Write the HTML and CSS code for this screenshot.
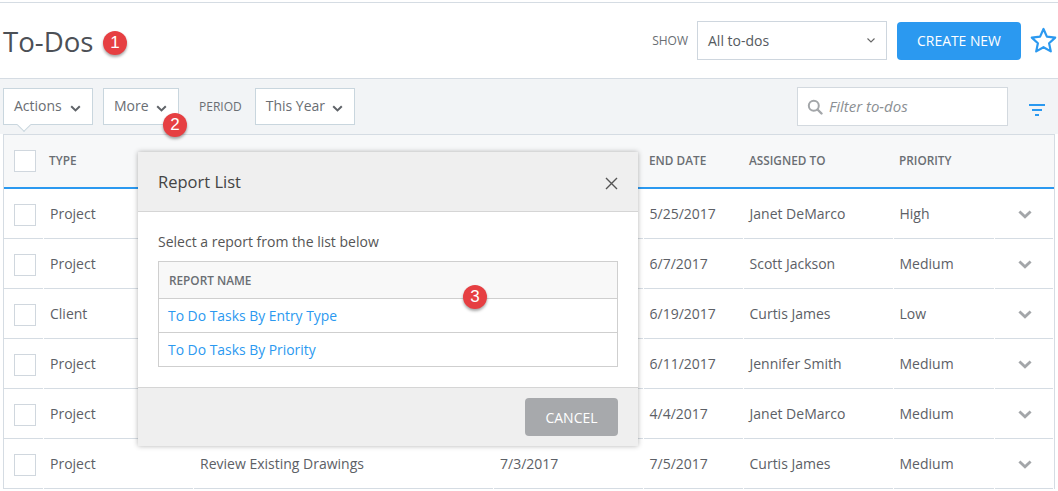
FILE: index.html
```html
<!DOCTYPE html>
<html lang="en">
<head>
<meta charset="utf-8">
<title>To-Dos</title>
<link rel="stylesheet" href="styles.css">
</head>
<body>
<div class="page">
  <header class="header">
    <div class="title-wrap">
      <h1 class="title">To-Dos</h1>
      <span class="badge badge-one">1</span>
    </div>
    <div class="header-actions">
      <span class="label">SHOW</span>
      <div class="select"><span>All to-dos</span>
        <svg class="select-caret" width="8" height="5" viewBox="0 0 8 5"><path d="M.5.5L4 4 7.5.5" fill="none" stroke="#666" stroke-width="1.1"/></svg>
      </div>
      <button class="btn-create">CREATE NEW</button>
      <svg class="star" width="27" height="27" viewBox="0 0 27 27"><path d="M13.5 2l3.4 7.6 8.3 1-6.1 5.6 1.7 8.2-7.3-4.2-7.3 4.2 1.7-8.2-6.1-5.6 8.3-1z" fill="none" stroke="#2b99f0" stroke-width="2.2" stroke-linejoin="round"/></svg>
    </div>
  </header>

  <div class="toolbar">
    <div class="tool-left">
      <div class="drop drop-actions"><span class="drop-text">Actions</span>
        <svg class="chev" width="11" height="7" viewBox="0 0 11 7"><path d="M1.2 1.2l4.3 4.2 4.3-4.2" fill="none" stroke="#5f6368" stroke-width="2"/></svg>
        <span class="pointer"></span>
      </div>
      <div class="drop drop-more"><span class="drop-text">More</span>
        <svg class="chev" width="11" height="7" viewBox="0 0 11 7"><path d="M1.2 1.2l4.3 4.2 4.3-4.2" fill="none" stroke="#5f6368" stroke-width="2"/></svg>
      </div>
      <span class="label label-period">PERIOD</span>
      <div class="drop drop-year"><span class="drop-text">This Year</span>
        <svg class="chev" width="11" height="7" viewBox="0 0 11 7"><path d="M1.2 1.2l4.3 4.2 4.3-4.2" fill="none" stroke="#5f6368" stroke-width="2"/></svg>
      </div>
    </div>
    <div class="tool-right">
      <div class="search">
        <svg width="16" height="16" viewBox="0 0 16 16"><circle cx="6.8" cy="6.8" r="5" fill="none" stroke="#a3a6a9" stroke-width="2"/><path d="M10.5 10.5l4 4" stroke="#a3a6a9" stroke-width="2.4" stroke-linecap="round"/></svg>
        <span class="search-text">Filter to-dos</span>
      </div>
      <svg class="filter" width="16" height="12" viewBox="0 0 16 12"><path d="M0 1h16M3 6h10M6 11h4" stroke="#2b99f0" stroke-width="2"/></svg>
    </div>
  </div>

  <div class="table">
    <div class="row row-head">
      <div class="cell"><span class="check"></span></div>
      <div class="cell cell-type">TYPE</div>
      <div class="cell"></div>
      <div class="cell"></div>
      <div class="cell">END DATE</div>
      <div class="cell">ASSIGNED TO</div>
      <div class="cell">PRIORITY</div>
      <div class="cell"></div>
    </div>
    <div class="row">
      <div class="cell"><span class="check"></span></div><div class="cell">Project</div><div class="cell"></div><div class="cell"></div><div class="cell cell-tight">5/25/2017</div><div class="cell cell-tight">Janet DeMarco</div><div class="cell cell-tight">High</div>
      <div class="cell cell-chev"><svg width="14" height="9" viewBox="0 0 14 9"><path d="M1.4 1.4L7 6.8l5.6-5.4" fill="none" stroke="#a3a6a9" stroke-width="2.8"/></svg></div>
    </div>
    <div class="row">
      <div class="cell"><span class="check"></span></div><div class="cell">Project</div><div class="cell"></div><div class="cell"></div><div class="cell cell-tight">6/7/2017</div><div class="cell cell-tight">Scott Jackson</div><div class="cell cell-tight">Medium</div>
      <div class="cell cell-chev"><svg width="14" height="9" viewBox="0 0 14 9"><path d="M1.4 1.4L7 6.8l5.6-5.4" fill="none" stroke="#a3a6a9" stroke-width="2.8"/></svg></div>
    </div>
    <div class="row">
      <div class="cell"><span class="check"></span></div><div class="cell">Client</div><div class="cell"></div><div class="cell"></div><div class="cell cell-tight">6/19/2017</div><div class="cell cell-tight">Curtis James</div><div class="cell cell-tight">Low</div>
      <div class="cell cell-chev"><svg width="14" height="9" viewBox="0 0 14 9"><path d="M1.4 1.4L7 6.8l5.6-5.4" fill="none" stroke="#a3a6a9" stroke-width="2.8"/></svg></div>
    </div>
    <div class="row">
      <div class="cell"><span class="check"></span></div><div class="cell">Project</div><div class="cell"></div><div class="cell"></div><div class="cell cell-tight">6/11/2017</div><div class="cell cell-tight">Jennifer Smith</div><div class="cell cell-tight">Medium</div>
      <div class="cell cell-chev"><svg width="14" height="9" viewBox="0 0 14 9"><path d="M1.4 1.4L7 6.8l5.6-5.4" fill="none" stroke="#a3a6a9" stroke-width="2.8"/></svg></div>
    </div>
    <div class="row">
      <div class="cell"><span class="check"></span></div><div class="cell">Project</div><div class="cell"></div><div class="cell"></div><div class="cell cell-tight">4/4/2017</div><div class="cell cell-tight">Janet DeMarco</div><div class="cell cell-tight">Medium</div>
      <div class="cell cell-chev"><svg width="14" height="9" viewBox="0 0 14 9"><path d="M1.4 1.4L7 6.8l5.6-5.4" fill="none" stroke="#a3a6a9" stroke-width="2.8"/></svg></div>
    </div>
    <div class="row">
      <div class="cell"><span class="check"></span></div><div class="cell">Project</div><div class="cell">Review Existing Drawings</div><div class="cell">7/3/2017</div><div class="cell cell-tight">7/5/2017</div><div class="cell cell-tight">Curtis James</div><div class="cell cell-tight">Medium</div>
      <div class="cell cell-chev"><svg width="14" height="9" viewBox="0 0 14 9"><path d="M1.4 1.4L7 6.8l5.6-5.4" fill="none" stroke="#a3a6a9" stroke-width="2.8"/></svg></div>
    </div>
  </div>

  <span class="badge badge-two">2</span>

  <div class="modal">
    <div class="modal-head">
      <span class="modal-title">Report List</span>
      <svg class="modal-close" width="13" height="13" viewBox="0 0 13 13"><path d="M1 1l11 11M12 1L1 12" stroke="#555" stroke-width="1.4"/></svg>
    </div>
    <div class="modal-body">
      <p class="modal-intro">Select a report from the list below</p>
      <div class="report-table">
        <div class="report-head">REPORT NAME</div>
        <div class="report-row">To Do Tasks By Entry Type</div>
        <div class="report-row">To Do Tasks By Priority</div>
      </div>
    </div>
    <div class="modal-foot">
      <button class="btn-cancel">CANCEL</button>
    </div>
  </div>

  <span class="badge badge-three">3</span>
</div>
</body>
</html>
```

FILE: styles.css
```css
* { box-sizing: border-box; }
html, body { margin: 0; padding: 0; background: #fff; }
body { width: 1058px; height: 491px; overflow: hidden; font-family: "Open Sans", sans-serif; font-size: 14px; color: #555a60; }
.page { position: relative; width: 1058px; height: 491px; overflow: hidden; padding-top: 2px; }

.header { height: 77px; border-top: 1px solid #d5dce3; border-bottom: 1px solid #d5dce3; display: flex; justify-content: space-between; align-items: center; }
.title-wrap { display: flex; align-items: center; padding-left: 3px; }
.title { margin: 0; font-size: 27.6px; font-weight: 400; color: #4c5056; line-height: 36px; }
.header-actions { display: flex; align-items: center; padding-right: 1px; }
.label { font-size: 12px; color: #6a6e73; }
.select { width: 190px; height: 39px; margin-left: 9px; border: 1px solid #ced6de; display: flex; align-items: center; justify-content: space-between; padding: 0 11px 0 10px; color: #555a60; }
.btn-create { width: 124px; height: 38px; margin-left: 10px; border: 0; border-radius: 4px; background: #2b99f0; color: #fff; font: 400 13.9px "Open Sans", sans-serif; padding: 0; }
.star { margin-left: 9px; }

.toolbar { height: 55px; background: #f2f4f6; display: flex; justify-content: space-between; align-items: flex-start; padding: 9px 13px 0 3px; }
.tool-left { display: flex; align-items: center; }
.drop { position: relative; height: 37px; background: #fff; border: 1px solid #c9d6de; display: flex; align-items: center; justify-content: space-between; padding: 0 11px 0 10px; color: #6a6e73; }
.drop-text { margin-top: -2px; }
.drop-actions { width: 90px; }
.drop-more { width: 76px; margin-left: 10px; }
.drop-year { width: 100px; }
.label-period { margin: 0 13px 0 20px; }
.chev { margin-top: 3px; }
.pointer { position: absolute; left: 15px; bottom: -6px; width: 10px; height: 10px; background: #fff; border-right: 1px solid #c9d6de; border-bottom: 1px solid #c9d6de; transform: rotate(45deg); }
.tool-right { display: flex; align-items: center; }
.search { width: 211px; height: 39px; margin-top: -1px; background: #fff; border: 1px solid #d3d9df; display: flex; align-items: center; padding-left: 9px; }
.search-text { margin: -2px 0 0 6px; font-size: 15px; font-style: italic; color: #8b8f93; }
.filter { margin: 5px 0 0 21px; }

.table { margin: 0 3px; border: 1px solid #d5dce3; border-bottom: 0; border-top: 1px solid #d5dce3; }
.row { display: grid; grid-template-columns: 39px 149px 299px 149px 99px 149px 100px 58px; column-gap: 1px; height: 50px; }
.cell { display: flex; align-items: center; padding-left: 6px; border-bottom: 1px solid #d5dce3; color: #5c6066; }
.cell-tight { padding-left: 5.5px; }
.row .cell:first-child { padding: 3px 0 0 10px; }
.row-head { height: 54px; background: #f7f8f9; column-gap: 1px; }
.row-head .cell { border-bottom: 2px solid #2b99f0; font-size: 11.8px; font-weight: 600; color: #6a6e73; padding: 0 0 3px 5px; margin-right: -1px; }
.row-head .cell:first-child { padding: 0 0 1px 10px; }
.check { width: 22px; height: 22px; background: #fff; border: 1px solid #d0d7de; }
.cell-chev { justify-content: flex-end; padding: 2px 21px 0 0; }

.badge { position: absolute; width: 24px; height: 24px; border-radius: 50%; background: #e63f42; color: #fff; font: 400 17px/24px "Liberation Sans", sans-serif; text-align: center; box-shadow: 0 2px 3px rgba(0, 0, 0, .35); }
.badge-one { left: 103px; top: 31px; }
.badge-two { left: 163px; top: 113px; z-index: 3; }
.badge-three { left: 463px; top: 285px; z-index: 3; }

.modal { position: absolute; left: 138px; top: 152px; width: 500px; height: 294px; background: #fff; box-shadow: 0 0 5px rgba(0, 0, 0, .3); display: flex; flex-direction: column; z-index: 2; }
.modal-head { height: 60px; background: #efefef; border-bottom: 1px solid #d5d5d5; display: flex; justify-content: space-between; align-items: center; padding: 0 20px; }
.modal-title { font-size: 16.5px; color: #444; }
.modal-close { margin-top: 3px; }
.modal-body { flex: 1; padding: 21px 20px 0; }
.modal-intro { margin: 0 0 10px; font-size: 14px; line-height: 18px; color: #555; }
.report-table { border: 1px solid #cfcfcf; border-bottom: 0; }
.report-head { height: 37px; line-height: 36px; padding-left: 10px; background: #f8f8f8; border-bottom: 1px solid #cfcfcf; font-size: 11.8px; font-weight: 600; color: #6a6e73; }
.report-row { height: 34px; line-height: 33px; padding-left: 9px; border-bottom: 1px solid #cfcfcf; color: #2b99f0; font-size: 13.9px; }
.modal-foot { height: 59px; background: #efefef; border-top: 1px solid #d5d5d5; display: flex; justify-content: flex-end; align-items: flex-start; padding: 10px 20px 0; }
.btn-cancel { width: 93px; height: 38px; border: 0; border-radius: 4px; background: #a7a9ac; color: #fff; font: 400 14px "Open Sans", sans-serif; padding: 0; }
```
